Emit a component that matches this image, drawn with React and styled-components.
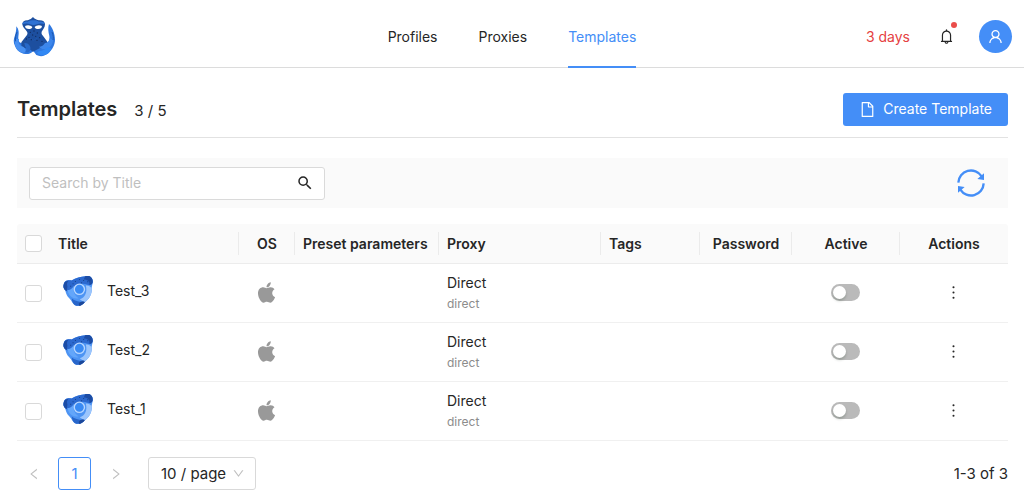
import React, { useState } from "react";
import styled, { createGlobalStyle } from "styled-components";
import {
  AiFillApple,
  AiOutlineBell,
  AiOutlineDown,
  AiOutlineFile,
  AiOutlineLeft,
  AiOutlineMore,
  AiOutlineRight,
  AiOutlineUser,
} from "react-icons/ai";
import { MdSearch } from "react-icons/md";

const GlobalStyle = createGlobalStyle`
  * {
    box-sizing: border-box;
  }

  body {
    margin: 0;
    background: #fff;
    color: #262626;
    font-family: Inter, "Liberation Sans", sans-serif;
    font-size: 14px;
    line-height: 22px;
  }

  button,
  input,
  select {
    font: inherit;
    color: inherit;
  }

  svg {
    display: block;
  }
`;

const Header = styled.header`
  display: grid;
  grid-template-columns: 1fr auto 1fr;
  align-items: center;
  height: 68px;
  padding: 0 12px;
  border-bottom: 1px solid #dcdcdc;
`;

const HomeLink = styled.a`
  justify-self: start;
  padding: 5px 0 0 1px;
`;

const Nav = styled.nav`
  display: flex;
  gap: 41px;
  align-self: stretch;
`;

const NavLink = styled.a`
  display: flex;
  align-items: center;
  height: 68px;
  padding-top: 7px;
  color: ${({ $active }) => ($active ? "#448ef7" : "#262626")};
  border-bottom: 2px solid ${({ $active }) => ($active ? "#448ef7" : "transparent")};
  text-decoration: none;
`;

const HeaderRight = styled.div`
  display: flex;
  align-items: center;
  justify-self: end;
  padding-top: 5px;
`;

const DaysLeft = styled.span`
  color: #e5413f;
`;

const BellButton = styled.button`
  position: relative;
  margin: 0 24px 0 28px;
  padding: 0;
  border: 0;
  background: none;
  cursor: pointer;

  &::after {
    content: "";
    position: absolute;
    top: -6px;
    right: -2px;
    width: 6px;
    height: 6px;
    border-radius: 50%;
    background: #ea4d4a;
  }
`;

const Avatar = styled.button`
  display: flex;
  align-items: center;
  justify-content: center;
  width: 33px;
  height: 33px;
  padding: 0;
  border: 0;
  border-radius: 50%;
  background: #448ef7;
  color: #fff;
  cursor: pointer;
`;

const Main = styled.main`
  padding: 0 16px 0 17px;
`;

const TitleBar = styled.div`
  display: flex;
  align-items: center;
  height: 70px;
  padding-top: 13px;
  border-bottom: 1px solid #e2e2e2;
`;

const PageTitle = styled.h1`
  margin: 0 17px 0 0;
  font-size: 20px;
  font-weight: 600;
  line-height: 28px;
`;

const Count = styled.span`
  padding-top: 4px;
  font-size: 15px;
`;

const CreateButton = styled.button`
  display: flex;
  align-items: center;
  gap: 7px;
  height: 33px;
  margin-left: auto;
  padding: 0 16px;
  border: 0;
  border-radius: 3px;
  background: #448ef7;
  color: #fff;
  cursor: pointer;
`;

const Toolbar = styled.div`
  display: flex;
  align-items: center;
  justify-content: space-between;
  height: 50px;
  margin: 20px 0 16px;
  padding: 0 23px 0 12px;
  background: #fafafa;
`;

const SearchBox = styled.label`
  display: flex;
  align-items: center;
  width: 296px;
  height: 33px;
  padding: 0 10px 0 12px;
  border: 1px solid #dadada;
  border-radius: 3px;
  background: #fff;
`;

const SearchInput = styled.input`
  flex: 1;
  min-width: 0;
  padding: 0;
  border: 0;
  outline: 0;
  background: none;

  &::placeholder {
    color: #bfbfbf;
    opacity: 1;
  }
`;

const PlainButton = styled.button`
  padding: 0;
  border: 0;
  background: none;
  color: ${({ $color }) => $color || "#262626"};
  cursor: pointer;
`;

const Table = styled.table`
  width: 100%;
  table-layout: fixed;
  border-collapse: separate;
  border-spacing: 0;
`;

const Th = styled.th`
  position: relative;
  width: ${({ $width }) => ($width ? `${$width}px` : "auto")};
  height: 40px;
  padding: 0 8px;
  border-bottom: 1px solid #ececec;
  background: #fafafa;
  font-weight: 600;
  text-align: ${({ $align }) => $align || "left"};
  white-space: nowrap;

  &:first-child {
    border-top-left-radius: 3px;
  }

  &:last-child {
    border-top-right-radius: 3px;
  }

  &:not(:first-child):not(:last-child)::after {
    content: "";
    position: absolute;
    top: 8px;
    right: 0;
    width: 1px;
    height: 23px;
    background: #ebebeb;
  }
`;

const Td = styled.td`
  height: 59px;
  padding: 0 8px;
  border-bottom: 1px solid #f0f0f0;
  text-align: ${({ $align }) => $align || "left"};
`;

const Centered = styled.div`
  display: flex;
  justify-content: center;
  padding: 0 1px 2px 0;
`;

const Checkbox = styled.input.attrs({ type: "checkbox" })`
  appearance: none;
  display: block;
  width: 17px;
  height: 17px;
  margin: 0;
  border: 1px solid #d9d9d9;
  border-radius: 3px;
  background: #fff;
  cursor: pointer;

  &:checked {
    border-color: #448ef7;
    background: #448ef7;
  }
`;

const TitleCell = styled.div`
  display: flex;
  align-items: center;
  gap: 14px;
  padding: 0 0 4px 5px;
`;

const ProxyName = styled.div`
  line-height: 22px;
`;

const ProxyType = styled.div`
  color: #8c8c8c;
  font-size: 12px;
  line-height: 20px;
`;

const Switch = styled.input.attrs({ type: "checkbox", role: "switch" })`
  appearance: none;
  width: 29px;
  height: 17px;
  margin: 0;
  padding: 2px;
  border-radius: 9px;
  background: ${({ checked }) => (checked ? "#448ef7" : "#bababa")};
  cursor: pointer;

  &::before {
    content: "";
    display: block;
    width: 13px;
    height: 13px;
    margin-left: ${({ checked }) => (checked ? "12px" : "0")};
    border-radius: 50%;
    background: #fff;
    box-shadow: 0 2px 3px rgba(0, 35, 11, 0.2);
  }
`;

const Footer = styled.footer`
  display: flex;
  align-items: center;
  padding: 16px 0 10px;
  font-size: 15px;
`;

const PageButton = styled.button`
  display: flex;
  align-items: center;
  justify-content: center;
  width: 33px;
  height: 33px;
  margin-right: 8px;
  padding: 0;
  border: 1px solid ${({ $active }) => ($active ? "#448ef7" : "transparent")};
  border-radius: 3px;
  background: #fff;
  color: ${({ $active }) => ($active ? "#448ef7" : "#bfbfbf")};
`;

const SelectWrap = styled.div`
  position: relative;
  margin-left: 8px;

  svg {
    position: absolute;
    top: 10px;
    right: 11px;
    color: #bfbfbf;
    pointer-events: none;
  }
`;

const Select = styled.select`
  appearance: none;
  display: block;
  height: 33px;
  width: 108px;
  padding: 0 24px 0 12px;
  border: 1px solid #d9d9d9;
  border-radius: 3px;
  background: #fff;
`;

const Total = styled.span`
  margin-left: auto;
`;

const OctopusLogo = () => (
  <svg width="44" height="40" viewBox="0 0 132 120" aria-hidden="true">
    <path
      d="M10 28c8 9 8 20 6 31-1 12 3 19 12 19l10-12h52l10 12c8-2 11-9 9-21-3-13-5-23-1-36 10 9 18 30 18 47 0 15-8 30-20 40-10 10-24 12-36 6l-9-12c-8 8-16 10-24 9-16-2-26-11-31-24C0 76 2 66 6 55c3-9 4-17 4-27z"
      fill="#2f78e0"
    />
    <path
      d="M60 0c4 5 10 8 17 10 12-1 19 4 19 12 0 10-6 15-10 22-2 6 2 10 6 15l12 17-5 22-18-5-21 11-16-11-18 2-1-19 14-18c5-6 6-9 2-15-5-7-12-12-13-21 0-8 7-13 17-12 6-3 11-5 15-10z"
      fill="#1d4f9f"
    />
    <path
      d="M28 22c-1-7 8-9 16-8 6-4 12-4 17-4 7 0 12 1 17 4 9-2 17 1 17 8-8-3-16-3-23 0-8 3-14 3-20 0-8-3-16-3-24 0z"
      fill="#2f72d4"
    />
    <path
      d="M36 27c9-5 17-2 22 3-1 7-14 8-20 3zM87 27c-9-5-17-2-22 3 1 7 14 8 20 3z"
      fill="#fff"
    />
    <path
      d="M18 66c-3 10 0 18 8 22 9 2 14 9 11 17-5 5-17 1-24-7C5 88 4 77 8 66z"
      fill="#4790f2"
    />
    <path
      d="M34 78c12-1 21 10 18 20-2 8-9 10-15 7 5-6 4-11-1-17z"
      fill="#2768c8"
    />
    <path
      d="M96 78c7 0 13-6 14-15l10 6c-1 14-8 24-21 28-10 1-17-3-21-8 8 0 14-4 18-11z"
      fill="#3d87ec"
    />
    <path
      d="M72 107c8-8 15-3 24-11 6-6 12-7 19-2-3 12-12 20-24 21-9 0-15-2-19-8z"
      fill="#3188f4"
    />
    <path
      d="M12 45c-4 10-6 18-4 28M117 45c4 10 5 17 3 24M49 63l12 7 13-7"
      fill="none"
      stroke="#1d57af"
      strokeWidth="3"
    />
    <g fill="#122c60">
      <circle cx="52" cy="46" r="2" />
      <circle cx="63" cy="42" r="2" />
      <circle cx="73" cy="48" r="2" />
      <circle cx="59" cy="54" r="2" />
      <circle cx="68" cy="58" r="2" />
      <circle cx="48" cy="61" r="2" />
      <circle cx="80" cy="62" r="2" />
      <circle cx="40" cy="66" r="2" />
      <circle cx="55" cy="68" r="2" />
      <circle cx="72" cy="70" r="2" />
      <circle cx="87" cy="73" r="2" />
    </g>
  </svg>
);

const BrowserIcon = () => (
  <svg width="30" height="30" viewBox="0 0 88 88" aria-hidden="true">
    <path
      d="M2 26C3 14 13 11 25 13 38 6 52 2 66 1c12-3 22 4 21 17 0 7-3 12-3 19 2 18-9 32-20 40-7 9-19 14-30 8-7-5-8-12-15-19C9 57 9 48 6 41 2 36 0 32 2 26z"
      fill="#4d94f3"
    />
    <path
      d="M2 26C3 14 13 11 25 13 38 6 52 2 66 1c12-3 22 4 21 17-1 7-7 9-15 8-13-6-36-4-44 13-4 9-15 9-22 2-4-5-6-9-4-15z"
      fill="#2c69cf"
    />
    <path
      d="M2 26c1-7 6-11 14-12-5 6-5 11-3 17l-2 14C4 41 0 34 2 26zM65 1c14-3 23 4 22 17-1 5-5 8-10 8 3-9-4-16-16-16z"
      fill="#1d4da5"
    />
    <path
      d="M67 28c9-1 15 4 17 10 1 17-8 30-20 39-5-2-10-5-15-9 16-4 23-20 18-40z"
      fill="#9bc5fc"
    />
    <path d="M26 66c8 7 22 11 38 10-7 10-20 15-30 9-5-4-8-11-8-19z" fill="#2866ca" />
    <path d="M46 82c4-7 9-9 18-6-4 6-10 10-16 12z" fill="#1b4799" />
    <path d="M12 42c12-1 17-8 21-14-4 13-2 29 13 37-12 3-21-2-28-11z" fill="#63a6fa" />
    <circle cx="48" cy="39" r="15" fill="#398af3" stroke="#b8d7ff" strokeWidth="4" />
    <path
      d="M35 16h3M47 10h3M59 13h3M71 17h3M28 23h3M53 20h3M78 12h3M21 30h3"
      stroke="#17458f"
      strokeWidth="3"
    />
  </svg>
);

const RefreshIcon = () => (
  <svg width="28" height="28" viewBox="0 0 84 84" aria-hidden="true">
    <path
      d="M4 41A38 38 0 0 1 74 22M80 43A38 38 0 0 1 10 62"
      fill="none"
      stroke="currentColor"
      strokeWidth="7"
    />
    <path d="M81 13v20l-20-3zM3 71V51l20 3z" fill="currentColor" />
  </svg>
);

const columns = [
  { name: "Title" },
  { name: "OS", width: 56, align: "center" },
  { name: "Preset parameters", width: 144 },
  { name: "Proxy", width: 162 },
  { name: "Tags", width: 99 },
  { name: "Password", width: 92, align: "center" },
  { name: "Active", width: 108, align: "center" },
  { name: "Actions", width: 108, align: "center" },
];

const templates = [
  { id: 3, title: "Test_3" },
  { id: 2, title: "Test_2" },
  { id: 1, title: "Test_1" },
];

function TemplateRow({ title, selected, onSelect }) {
  const [active, setActive] = useState(false);

  return (
    <tr>
      <Td>
        <Checkbox aria-label={`Select ${title}`} checked={selected} onChange={onSelect} />
      </Td>
      <Td>
        <TitleCell>
          <BrowserIcon />
          {title}
        </TitleCell>
      </Td>
      <Td>
        <Centered>
          <AiFillApple size={25} color="#999" aria-label="macOS" />
        </Centered>
      </Td>
      <Td />
      <Td>
        <ProxyName>Direct</ProxyName>
        <ProxyType>direct</ProxyType>
      </Td>
      <Td />
      <Td />
      <Td>
        <Centered>
          <Switch
            aria-label={`${title} active`}
            checked={active}
            onChange={() => setActive(!active)}
          />
        </Centered>
      </Td>
      <Td>
        <Centered>
          <PlainButton aria-label={`${title} actions`}>
            <AiOutlineMore size={19} />
          </PlainButton>
        </Centered>
      </Td>
    </tr>
  );
}

export default function App() {
  const [search, setSearch] = useState("");
  const [selected, setSelected] = useState([]);

  const rows = templates.filter((t) => t.title.toLowerCase().includes(search.toLowerCase()));
  const allSelected = selected.length === templates.length;

  const toggleAll = () => setSelected(allSelected ? [] : templates.map((t) => t.id));

  const toggle = (id) => {
    if (selected.includes(id)) {
      setSelected(selected.filter((s) => s !== id));
    } else {
      setSelected([...selected, id]);
    }
  };

  return (
    <>
      <GlobalStyle />
      <Header>
        <HomeLink href="#" aria-label="Home">
          <OctopusLogo />
        </HomeLink>
        <Nav>
          <NavLink href="#profiles">Profiles</NavLink>
          <NavLink href="#proxies">Proxies</NavLink>
          <NavLink href="#templates" $active>
            Templates
          </NavLink>
        </Nav>
        <HeaderRight>
          <DaysLeft>3 days</DaysLeft>
          <BellButton aria-label="Notifications">
            <AiOutlineBell size={17} />
          </BellButton>
          <Avatar aria-label="Account">
            <AiOutlineUser size={17} />
          </Avatar>
        </HeaderRight>
      </Header>
      <Main>
        <TitleBar>
          <PageTitle>Templates</PageTitle>
          <Count>3 / 5</Count>
          <CreateButton>
            <AiOutlineFile size={17} />
            Create Template
          </CreateButton>
        </TitleBar>
        <Toolbar>
          <SearchBox>
            <SearchInput
              aria-label="Search by Title"
              placeholder="Search by Title"
              value={search}
              onChange={(e) => setSearch(e.target.value)}
            />
            <MdSearch size={18} />
          </SearchBox>
          <PlainButton $color="#448ef7" aria-label="Refresh">
            <RefreshIcon />
          </PlainButton>
        </Toolbar>
        <Table>
          <thead>
            <tr>
              <Th $width={33}>
                <Checkbox aria-label="Select all" checked={allSelected} onChange={toggleAll} />
              </Th>
              {columns.map(({ name, width, align }) => (
                <Th key={name} $width={width} $align={align}>
                  {name}
                </Th>
              ))}
            </tr>
          </thead>
          <tbody>
            {rows.map(({ id, title }) => (
              <TemplateRow
                key={id}
                title={title}
                selected={selected.includes(id)}
                onSelect={() => toggle(id)}
              />
            ))}
          </tbody>
        </Table>
        <Footer>
          <PageButton aria-label="Previous page" disabled>
            <AiOutlineLeft size={14} />
          </PageButton>
          <PageButton $active>1</PageButton>
          <PageButton aria-label="Next page" disabled>
            <AiOutlineRight size={14} />
          </PageButton>
          <SelectWrap>
            <Select aria-label="Page size" defaultValue="10">
              <option value="10">10 / page</option>
              <option value="20">20 / page</option>
              <option value="50">50 / page</option>
            </Select>
            <AiOutlineDown size={13} />
          </SelectWrap>
          <Total>1-3 of 3</Total>
        </Footer>
      </Main>
    </>
  );
}
